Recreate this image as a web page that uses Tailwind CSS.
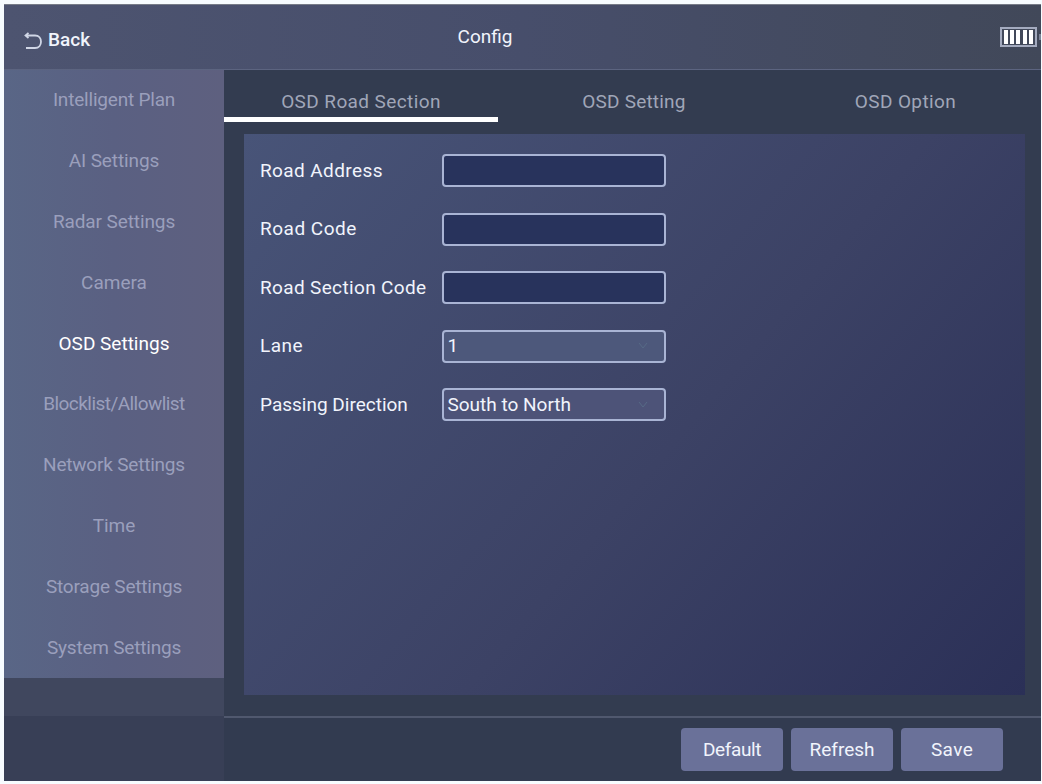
<!DOCTYPE html>
<html lang="en">

<head>
    <meta charset="UTF-8">
    <meta name="viewport" content="width=device-width, initial-scale=1.0">
    <title>Config | OSD Settings</title>
    <script src="https://cdn.jsdelivr.net/npm/@tailwindcss/browser@4"></script>
</head>

<body class="bg-[#f7fcff] h-[784px] pt-1 pl-1 pr-px pb-[3px] overflow-hidden font-['Roboto',sans-serif] text-[19px] leading-6 text-[#f1f4fc]">
    <div class="h-full flex flex-col bg-[#333c50]">
        <header class="h-[66px] shrink-0 grid grid-cols-3 items-center border-t border-b border-t-[#777c88] border-b-[#5c6480] bg-linear-to-r from-[#4d5470] via-[#474e6b] to-[#414859]">
            <a href="#" class="flex items-center gap-1.5 pl-5 pt-1.5 font-medium">
                <svg class="w-[18px] h-[18px] mt-0.5 text-[#d0d6e6]" viewBox="0 0 18 18" fill="none" stroke="currentColor" stroke-width="1.8">
                    <path d="M1.5 3.5H11C19 3.5 19 16 11 16H2M4.5 0.8L1.5 3.5L4.5 6" />
                </svg>
                Back
            </a>
            <h1 class="text-center pr-[75px]">Config</h1>
            <!-- Battery -->
            <div class="flex items-center justify-end gap-0.5">
                <div class="flex justify-between w-[37px] h-5 border-2 border-[#a4abbf] px-0.5 py-px">
                    <span class="w-1 bg-white"></span>
                    <span class="w-1 bg-white"></span>
                    <span class="w-1 bg-white"></span>
                    <span class="w-1 bg-white"></span>
                    <span class="w-1 bg-white"></span>
                </div>
                <span class="w-0.5 h-1.5 bg-[#7d8498]"></span>
            </div>
        </header>

        <div class="flex flex-1 min-h-0">
            <aside class="w-[220px] shrink-0 bg-[#40475e]">
                <nav class="h-[608px] grid grid-rows-10 items-center text-center tracking-[-0.2px] text-[#9a9fbc] bg-linear-to-r from-[#596686] via-[#5a6082] to-[#5e607f]">
                    <a href="#">Intelligent Plan</a>
                    <a href="#" class="tracking-[-0.1px]">AI Settings</a>
                    <a href="#" class="tracking-[-0.1px]">Radar Settings</a>
                    <a href="#" class="tracking-normal">Camera</a>
                    <a href="#" class="tracking-normal text-white">OSD Settings</a>
                    <a href="#" class="tracking-[-0.55px]">Blocklist/Allowlist</a>
                    <a href="#">Network Settings</a>
                    <a href="#" class="tracking-normal">Time</a>
                    <a href="#">Storage Settings</a>
                    <a href="#">System Settings</a>
                </nav>
            </aside>

            <main class="flex-1 flex flex-col pb-[21px]">
                <div class="h-[52px] grid grid-cols-[274px_272px_1fr] text-center text-[#a0a6b8]">
                    <a href="#" class="pt-5 border-b-[5px] border-white tracking-[0.4px]">OSD Road Section</a>
                    <a href="#" class="pt-5 tracking-[0.2px]">OSD Setting</a>
                    <a href="#" class="pt-5 tracking-[0.4px]">OSD Option</a>
                </div>
                <form class="flex-1 mt-3 ml-5 mr-4 pl-4 pt-5 flex flex-col gap-[25.6px] bg-linear-[130deg] from-[#485478] via-[#3c4265] via-55% to-[#2b3057]">
                    <label class="flex items-center h-[33px]">
                        <span class="w-[181.5px] tracking-[0.4px]">Road Address</span>
                        <input type="text" class="w-[224px] h-[33px] rounded border-2 border-[#a9b4d4] bg-[#28335c]">
                    </label>
                    <label class="flex items-center h-[33px]">
                        <span class="w-[181.5px] tracking-[0.5px]">Road Code</span>
                        <input type="text" class="w-[224px] h-[33px] rounded border-2 border-[#a9b4d4] bg-[#28335c]">
                    </label>
                    <label class="flex items-center h-[33px]">
                        <span class="w-[181.5px] tracking-[0.35px]">Road Section Code</span>
                        <input type="text" class="w-[224px] h-[33px] rounded border-2 border-[#a9b4d4] bg-[#28335c]">
                    </label>
                    <div class="flex items-center h-[33px]">
                        <span class="w-[181.5px] tracking-[0.5px]">Lane</span>
                        <button type="button" class="w-[224px] h-[33px] flex items-center justify-between pl-1 pr-4 rounded border-2 border-[#a9b4d4] bg-[#4d587b]">
                            1
                            <svg class="w-2.5 h-2" viewBox="0 0 10 8" fill="none" stroke="#566a86"><path d="M1 1L5 6L9 1" /></svg>
                        </button>
                    </div>
                    <div class="flex items-center h-[33px]">
                        <span class="w-[181.5px]">Passing Direction</span>
                        <button type="button" class="w-[224px] h-[33px] flex items-center justify-between pl-1 pr-4 rounded border-2 border-[#a9b4d4] bg-[#4d5378]">
                            South to North
                            <svg class="w-2.5 h-2" viewBox="0 0 10 8" fill="none" stroke="#566a86"><path d="M1 1L5 6L9 1" /></svg>
                        </button>
                    </div>
                </form>
            </main>
        </div>

        <footer class="h-[65px] shrink-0 flex">
            <div class="w-[220px] bg-[#383f56]"></div>
            <div class="flex-1 flex justify-end gap-2 pt-2.5 pr-[38px] border-t-2 border-[#50586e] bg-[#323b50]">
                <button class="w-[102px] h-[43px] rounded bg-[#6a7199] tracking-[-0.4px]">Default</button>
                <button class="w-[102px] h-[43px] rounded bg-[#6a7199]">Refresh</button>
                <button class="w-[102px] h-[43px] rounded bg-[#6a7199] tracking-[0.4px]">Save</button>
            </div>
        </footer>
    </div>
</body>

</html>
